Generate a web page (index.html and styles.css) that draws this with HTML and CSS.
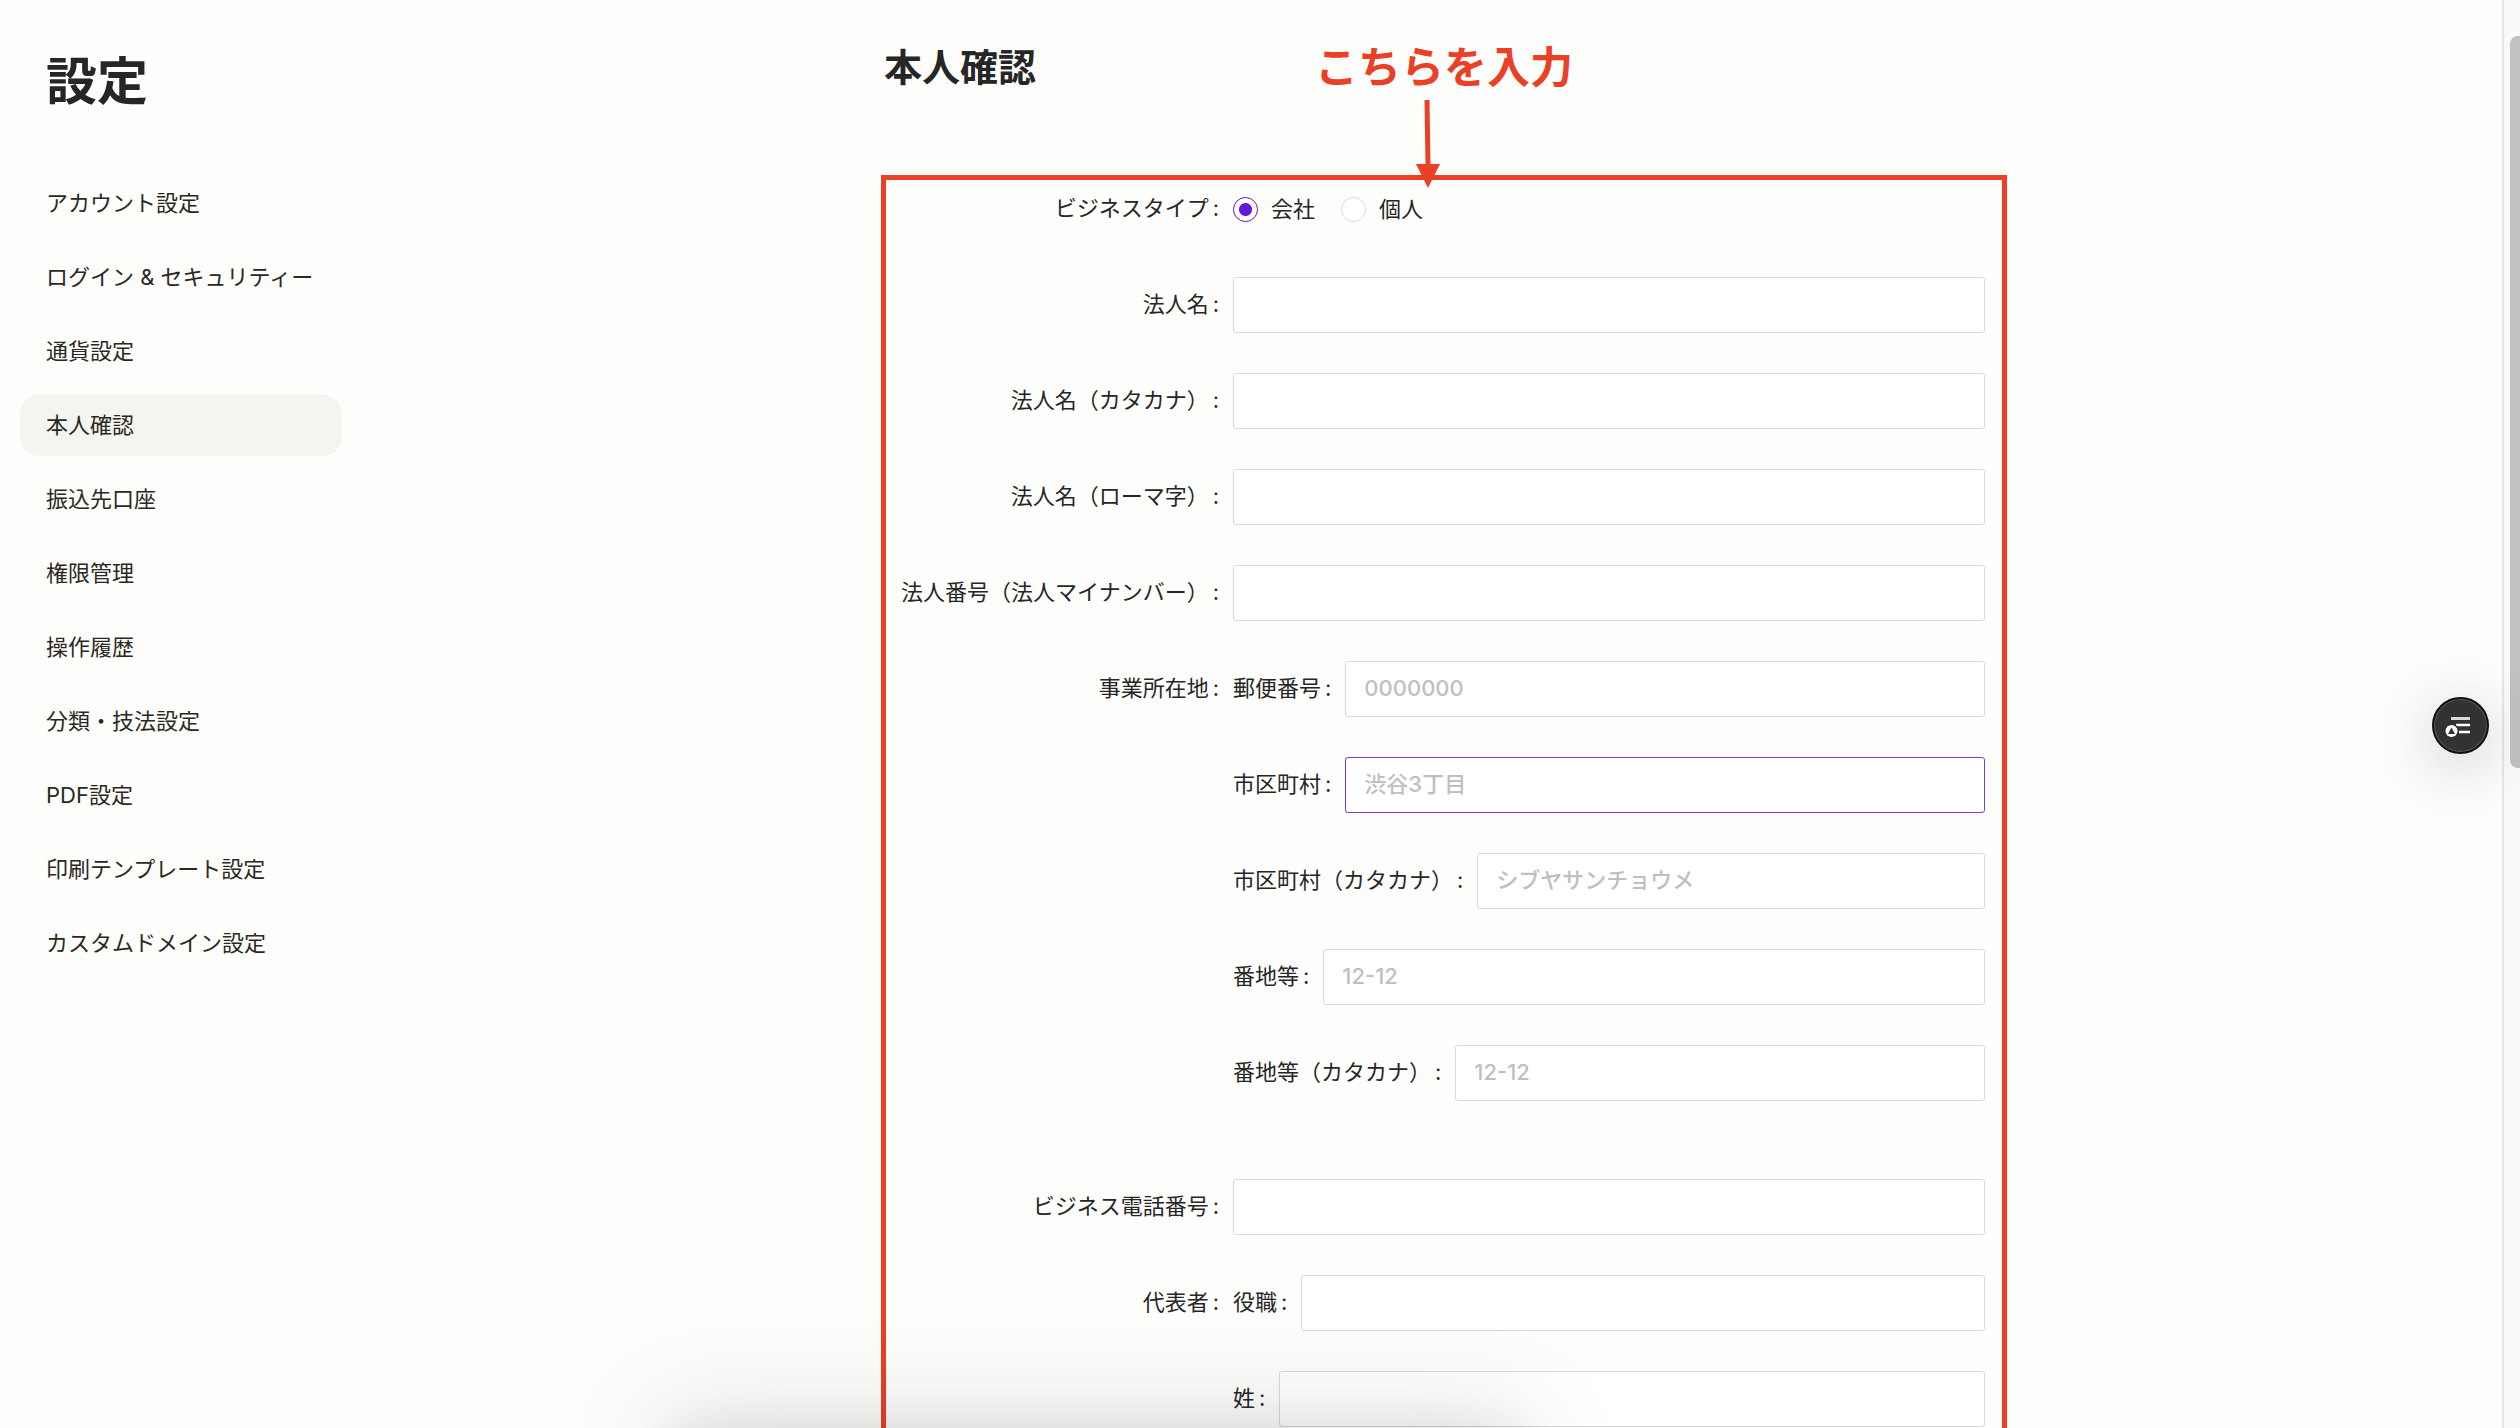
FILE: index.html
```html
<!DOCTYPE html>
<html lang="ja">
<head>
  <meta charset="UTF-8" />
  <meta name="viewport" content="width=device-width, initial-scale=1.0"/>
  <title>本人確認</title>
  <link rel="stylesheet" href="styles.css">
</head>
<body>

  <div class="app">

    <!-- サイドバー -->
    <aside class="sidebar">
      <h1>設定</h1>
      <nav class="menu">
        <a href="#">アカウント設定</a>
        <a href="#">ログイン &amp; セキュリティー</a>
        <a href="#">通貨設定</a>
        <a href="#" class="active">本人確認</a>
        <a href="#">振込先口座</a>
        <a href="#">権限管理</a>
        <a href="#">操作履歴</a>
        <a href="#">分類・技法設定</a>
        <a href="#">PDF設定</a>
        <a href="#">印刷テンプレート設定</a>
        <a href="#">カスタムドメイン設定</a>
      </nav>
    </aside>

    <!-- メイン -->
    <main class="main">
      <div class="page">
        <header class="page-header">
          <h2>本人確認</h2>
          <p class="note">こちらを入力
            <svg class="note-arrow" width="26" height="90" viewBox="0 0 26 90" aria-hidden="true">
              <path d="M12 1 L13 68" fill="none" stroke="#ea4025" stroke-width="5"/>
              <path d="M1 65 H25 L13 89 Z" fill="#ea4025"/>
            </svg>
          </p>
        </header>

        <form class="form">
          <div class="row" role="radiogroup" aria-labelledby="type-label">
            <span class="label" id="type-label">ビジネスタイプ</span>
            <div class="radios">
              <label><input type="radio" name="type" checked>会社</label>
              <label><input type="radio" name="type">個人</label>
            </div>
          </div>
          <div class="row">
            <label class="label" for="company">法人名</label>
            <input type="text" id="company">
          </div>
          <div class="row">
            <label class="label" for="company-kana">法人名（カタカナ）</label>
            <input type="text" id="company-kana">
          </div>
          <div class="row">
            <label class="label" for="company-roman">法人名（ローマ字）</label>
            <input type="text" id="company-roman">
          </div>
          <div class="row">
            <label class="label" for="company-number">法人番号（法人マイナンバー）</label>
            <input type="text" id="company-number">
          </div>

          <!-- 所在地 -->
          <div class="row address">
            <span class="label">事業所在地</span>
            <div class="group">
              <div class="field">
                <label class="label" for="zip">郵便番号</label>
                <input type="text" id="zip" placeholder="0000000">
              </div>
              <div class="field">
                <label class="label" for="town">市区町村</label>
                <input type="text" id="town" class="hovered" placeholder="渋谷3丁目">
              </div>
              <div class="field">
                <label class="label" for="town-kana">市区町村（カタカナ）</label>
                <input type="text" id="town-kana" placeholder="シブヤサンチョウメ">
              </div>
              <div class="field">
                <label class="label" for="line1">番地等</label>
                <input type="text" id="line1" placeholder="12-12">
              </div>
              <div class="field">
                <label class="label" for="line1-kana">番地等（カタカナ）</label>
                <input type="text" id="line1-kana" placeholder="12-12">
              </div>
            </div>
          </div>

          <div class="row">
            <label class="label" for="phone">ビジネス電話番号</label>
            <input type="text" id="phone">
          </div>

          <!-- 代表者 -->
          <div class="row">
            <span class="label">代表者</span>
            <div class="group">
              <div class="field">
                <label class="label" for="role">役職</label>
                <input type="text" id="role">
              </div>
              <div class="field">
                <label class="label" for="last-name">姓</label>
                <input type="text" id="last-name">
              </div>
            </div>
          </div>
        </form>
      </div>
    </main>

    <div class="scrollbar"><div class="thumb"></div></div>
  </div>

  <div class="bottom-shadow"></div>

  <button class="fab" type="button" aria-label="メニュー">
    <svg width="53" height="53" viewBox="0 0 53 53" aria-hidden="true">
      <path d="M17 19.5 H36" stroke="#d9d9d7" stroke-width="3"/>
      <path d="M22 26 H36 M25 33 H36" stroke="#fff" stroke-width="2.4"/>
      <circle cx="17.5" cy="32" r="7.5" fill="#333231"/>
      <circle cx="17.5" cy="32" r="6" fill="#fff"/>
      <path d="M17.5 28.5 L21 35 H14 Z" fill="#333231"/>
    </svg>
  </button>

</body>
</html>
```
FILE: styles.css
```css
/* === RESET & BASE === */
* { margin: 0; padding: 0; box-sizing: border-box; }

:root {
  --primary: #6518d9;
  --accent: #ea4025;
  --bg: #fdfdfc;
  --text: #262626;
  --border: #d9d9d9;
}

body {
  font-family: Inter, "Noto Sans CJK JP", sans-serif;
  font-size: 22px;
  line-height: 32px;
  background: var(--bg);
  color: var(--text);
}

.app {
  display: flex;
  height: 100vh;
  overflow: hidden;
}

/* === SIDEBAR === */
.sidebar {
  width: 386px;
  flex-shrink: 0;
  padding: 50px 44px 0 20px;
}

.sidebar h1 {
  font-size: 51px;
  line-height: 64px;
  padding-left: 26px;
  margin-bottom: 59px;
}

.menu {
  display: flex;
  flex-direction: column;
  gap: 13px;
}

.menu a {
  padding: 14px 26px 15px;
  border-radius: 19px;
  color: #2b2822;
  text-decoration: none;
}

.menu a.active { background: #f4f4f1; }

/* === MAIN === */
.main { flex: 1; }

.page {
  max-width: 1126px;
  margin: 0 auto;
}

.page-header {
  display: grid;
  grid-template-columns: 1fr auto 1fr;
  align-items: center;
  height: 175px;
  padding-bottom: 42px;
}

.page-header h2 {
  font-size: 38px;
  line-height: 48px;
  padding-left: 3px;
}

.note {
  position: relative;
  font-size: 43px;
  line-height: 48px;
  font-weight: 700;
  color: var(--accent);
}

.note-arrow {
  position: absolute;
  top: 56px;
  left: 100px;
}

/* === FORM === */
.form {
  border: 5px solid var(--accent);
  padding: 1px 17px 40px 0;
  display: flex;
  flex-direction: column;
  gap: 40px;
}

.row {
  display: grid;
  grid-template-columns: 347px 1fr;
}

.row > .label { text-align: right; }

.label {
  line-height: 54px;
  height: 56px;
  white-space: nowrap;
}

.label::after {
  content: ":";
  margin: 0 14px 0 4px;
}

.group {
  display: flex;
  flex-direction: column;
  gap: 40px;
}

.field { display: flex; }

.address { margin-bottom: 38px; }

input[type="text"] {
  flex: 1;
  min-width: 0;
  height: 56px;
  padding: 0 18px 2px;
  border: 1px solid var(--border);
  border-radius: 3px;
  background: #fff;
  font: inherit;
  color: var(--text);
}

input[type="text"]::placeholder {
  font-weight: 500;
  color: #bfbfbf;
}

input[type="text"].hovered { border-color: #8038dc; }

/* === RADIO === */
.radios {
  display: flex;
  align-items: center;
  gap: 26px;
}

.radios label {
  display: flex;
  align-items: center;
  gap: 13px;
}

input[type="radio"] {
  appearance: none;
  width: 25px;
  height: 25px;
  border: 1px solid var(--border);
  border-radius: 50%;
  background: #fff;
}

input[type="radio"]:checked {
  border-color: var(--primary);
  background: radial-gradient(circle, var(--primary) 6px, #fff 7px);
}

/* === SCROLLBAR === */
.scrollbar {
  width: 18px;
  border-left: 2px solid #e6e6e6;
  background: #fafafa;
  padding: 36px 0 0 6px;
}

.thumb {
  height: 732px;
  border-radius: 8px 0 0 8px;
  background: #c1c1c1;
}

/* === OVERLAYS === */
.bottom-shadow {
  position: fixed;
  left: 665px;
  bottom: -60px;
  width: 860px;
  height: 60px;
  box-shadow: 0 0 50px rgba(0,0,0,0.08), 0 0 110px rgba(0,0,0,0.18);
  pointer-events: none;
}

.fab {
  position: fixed;
  right: 31px;
  top: 697px;
  width: 57px;
  height: 57px;
  border: 2px solid #111;
  border-radius: 50%;
  background: #333231;
  box-shadow: inset 0 0 0 1px #5a5a58, 0 12px 60px rgba(0,0,0,0.22);
  cursor: pointer;
}
```
